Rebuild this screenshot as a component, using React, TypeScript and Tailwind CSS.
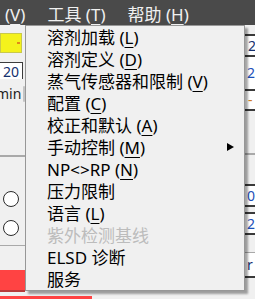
const items: { label: string; key?: string; sub?: boolean; disabled?: boolean }[] = [
  { label: '溶剂加载', key: 'L' },
  { label: '溶剂定义', key: 'D' },
  { label: '蒸气传感器和限制', key: 'V' },
  { label: '配置', key: 'C' },
  { label: '校正和默认', key: 'A' },
  { label: '手动控制', key: 'M', sub: true },
  { label: 'NP<>RP', key: 'N' },
  { label: '压力限制' },
  { label: '语言', key: 'L' },
  { label: '紫外检测基线', disabled: true },
  { label: 'ELSD 诊断' },
  { label: '服务' },
];

function Hotkey({ k }: { k: string }) {
  return (
    <>
      {' ('}
      <span className="underline decoration-1 underline-offset-[3px]">{k}</span>
      {')'}
    </>
  );
}

function ToolsMenu() {
  return (
    <div className="absolute left-[25px] top-[25px] w-[220px] border border-[#979797] bg-[#f0f0f0] shadow-[3px_3px_2px_rgba(0,0,0,0.35)]">
      {items.map((it, i) => (
        <div
          key={i}
          className={`flex h-[22px] items-center pl-[21px] text-[17px] leading-none ${
            it.disabled ? 'text-[#bcbcbc]' : 'text-black'
          }`}
        >
          <span>
            {it.label}
            {it.key && <Hotkey k={it.key} />}
          </span>
          {it.sub && (
            <svg className="ml-auto mr-[10px]" width="7" height="8" viewBox="0 0 7 8">
              <polygon points="0,0 7,4 0,8" fill="#000" />
            </svg>
          )}
        </div>
      ))}
    </div>
  );
}

export default function App() {
  return (
    <div className="relative h-[299px] w-[255px] overflow-hidden bg-[#f0f0f0] font-['Noto_Sans','Noto_Sans_CJK_SC',sans-serif]">
      {/* menu bar */}
      <div className="flex h-[25px] items-center gap-[22px] bg-[#4a4a4a] pl-[5px] pt-[3px] text-[17px] leading-none text-[#f0f0f0]">
        <span>
          (<span className="underline decoration-1 underline-offset-[3px]">V</span>)
        </span>
        <span>
          工具<Hotkey k="T" />
        </span>
        <span>
          帮助<Hotkey k="H" />
        </span>
      </div>

      <div className="flex h-[274px]">
        {/* left strip of the window below */}
        <div className="flex w-[25px] flex-col">
          <div className="mt-[8px] flex h-[20px] w-[22px] items-center justify-end border border-[#c9c94a] bg-[#f4f21c] pr-[1px]">
            <span className="h-[2px] w-[3px] bg-[#e08a1a]" />
          </div>
          <div className="mt-[9px] flex h-[17px] w-[23px] items-center justify-end border-t border-r border-[#3c3c3c] bg-white pr-[3px] text-[14px] text-[#14306e]">
            20
          </div>
          <div className="mt-[7px] flex h-[16px] items-center">
            <span className="-ml-[4px] text-[14px] leading-none text-[#1e1e1e]">min</span>
            <span className="ml-[2px] h-[16px] w-[10px] rounded-full bg-[#c4c4c4]" />
          </div>
          <div className="mt-[53px] h-[2px] bg-[#a9a9a9]" />
          <div className="mt-[34px] ml-[3px] h-[16px] w-[16px] rounded-full border border-[#2a2a2a] bg-white" />
          <div className="mt-[13px] ml-[3px] h-[16px] w-[16px] rounded-full border border-[#2a2a2a] bg-white" />
          <div className="mt-[9px] h-[1px] bg-[#a9a9a9]" />
          <div className="mt-[24px] h-[20px] bg-[#ff4343]" />
          <div className="h-[2px] bg-[#b83a3a]" />
        </div>

        <div className="flex-1" />

        {/* right strip of the window below */}
        <div className="flex w-[10px] flex-col text-[14px] leading-none">
          <div className="mt-[9px] h-[2px] bg-[#3a3a3a]" />
          <div className="flex h-[19px] items-center bg-white pl-[3px] text-[#14306e]">2</div>
          <div className="h-[2px] bg-[#3a3a3a]" />
          <div className="flex h-[32px] items-center bg-white pl-[2px] text-[#1d4fb8]">20</div>
          <div className="h-[2px] bg-[#3a3a3a]" />
          <div className="flex h-[18px] items-center bg-white pl-[3px] text-[#d07a20]">-</div>
          <div className="h-[2px] bg-[#3a3a3a]" />
          <div className="mt-[42px] h-[2px] bg-[#a9a9a9]" />
          <div className="mt-[29px] h-[2px] bg-[#3a3a3a]" />
          <div className="flex h-[19px] items-center bg-white pl-[2px] text-[#1d4fb8]">05</div>
          <div className="h-[2px] bg-[#3a3a3a]" />
          <div className="mt-[5px] h-[2px] bg-[#3a3a3a]" />
          <div className="flex h-[19px] items-center bg-white pl-[2px] text-[#1d4fb8]">20</div>
          <div className="h-[2px] bg-[#3a3a3a]" />
          <div className="mt-[17px] h-[1px] bg-[#a9a9a9]" />
          <div className="flex h-[23px] items-center bg-white pl-[2px] text-[#14306e]">r</div>
          <div className="h-[2px] bg-[#3a3a3a]" />
        </div>
      </div>

      {/* bottom red strip */}
      <div className="absolute bottom-0 left-0 h-[3px] w-[92px] bg-[#ff4343]" />

      <ToolsMenu />
    </div>
  );
}
